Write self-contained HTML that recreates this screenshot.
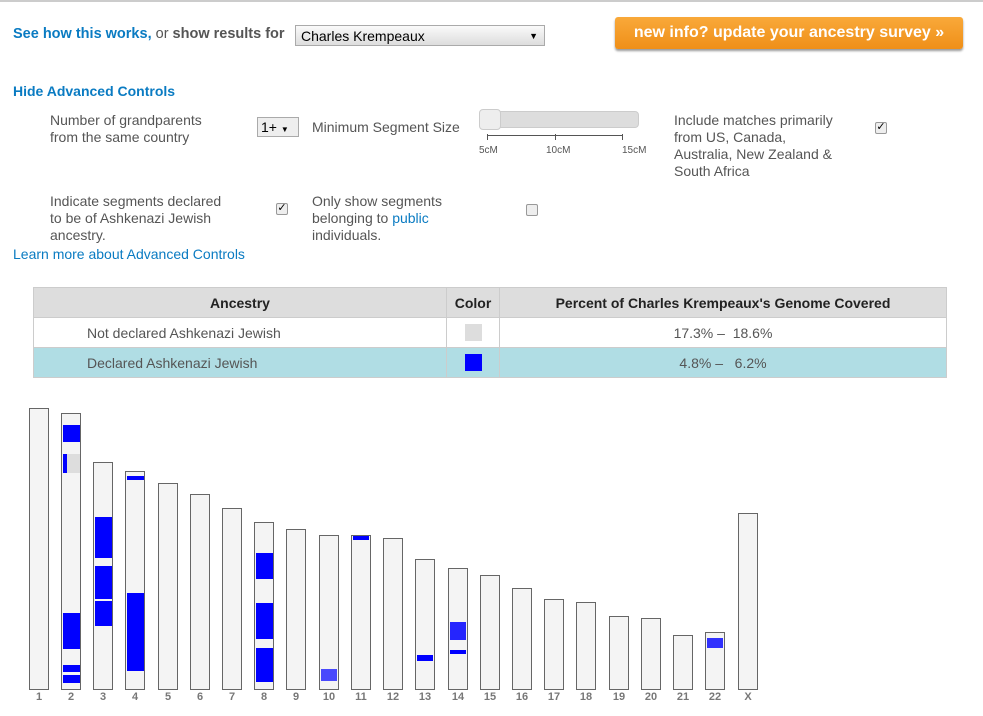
<!DOCTYPE html>
<html><head><style>
body{margin:0;width:983px;height:716px;background:#fff;font-family:"Liberation Sans",sans-serif;position:relative;overflow:hidden;color:#555;font-size:14px}
.a{position:absolute}
.blue{color:#0a7bc2}
.c{position:absolute;width:18px;border:1px solid #666;background:#f4f4f4;bottom:26px}
.n{position:absolute;top:691px;font-size:11px;font-weight:bold;color:#777;width:20px;text-align:center}
.s{position:absolute;background:#0000ff}
.g{position:absolute;background:#ddd}
.chk{position:absolute;width:10px;height:10px;border:1px solid #999;border-radius:2px;background:#eee;font-size:11px;line-height:9px;color:#000;text-align:center}
table{position:absolute;left:33px;top:287px;width:914px;border-collapse:collapse;font-size:14px}
td,th{border:1px solid #ccc;height:29px;padding:0}
th{background:#ddd;color:#222}
</style></head><body>
<div class="a" style="left:0;top:0;width:983px;height:2px;background:#ccc"></div>
<div class="a" style="left:13px;top:26px;font-weight:bold;font-size:14.5px"><span class="blue">See how this works,</span> <span style="font-weight:normal">or</span> show results for</div>
<div class="a" style="left:295px;top:25px;background:linear-gradient(#fafafa,#ddd);border:1px solid #aaa;color:#000;font-size:14px;line-height:20px;padding-left:5px;box-sizing:border-box;width:250px;height:21px">Charles Krempeaux<span style="position:absolute;right:6px;font-size:9px">▼</span></div>
<div class="a" style="left:615px;top:17px;width:348px;height:32px;background:linear-gradient(#f9a93a,#ef8f18);border-radius:3px;box-shadow:0 2px 2px #999;color:#fff;font-weight:bold;font-size:16px;line-height:31px;text-align:center">new info? update your ancestry survey »</div>
<div class="a blue" style="left:13px;top:83px;font-weight:bold">Hide Advanced Controls</div>
<div class="a" style="left:50px;top:112px;line-height:17px">Number of grandparents<br>from the same country</div>
<div class="a" style="left:257px;top:117px;width:42px;height:20px;border:1px solid #aaa;background:#eee;box-sizing:border-box;color:#000;font-size:14px;line-height:19px;padding-left:3px">1+ <span style="font-size:8px">▼</span></div>
<div class="a" style="left:312px;top:119px">Minimum Segment Size</div>
<div class="a" style="left:479px;top:111px;width:158px;height:15px;background:#ddd;border:1px solid #ccc;border-radius:4px"></div>
<div class="a" style="left:479px;top:109px;width:20px;height:19px;background:#eee;border:1px solid #ccc;border-radius:4px"></div>
<div class="a" style="left:487px;top:135px;width:136px;height:1px;background:#555"></div>
<div class="a" style="left:487px;top:134px;width:1px;height:6px;background:#555"></div>
<div class="a" style="left:555px;top:134px;width:1px;height:6px;background:#555"></div>
<div class="a" style="left:622px;top:134px;width:1px;height:6px;background:#555"></div>
<div class="a" style="left:479px;top:145px;font-size:10px">5cM</div>
<div class="a" style="left:546px;top:145px;font-size:10px">10cM</div>
<div class="a" style="left:622px;top:145px;font-size:10px">15cM</div>
<div class="a" style="left:674px;top:112px;line-height:17px">Include matches primarily<br>from US, Canada,<br>Australia, New Zealand &amp;<br>South Africa</div>
<div class="chk" style="left:875px;top:122px">✓</div>
<div class="a" style="left:50px;top:193px;line-height:17px">Indicate segments declared<br>to be of Ashkenazi Jewish<br>ancestry.</div>
<div class="chk" style="left:276px;top:203px">✓</div>
<div class="a" style="left:312px;top:193px;line-height:17px">Only show segments<br>belonging to <span class="blue">public</span><br>individuals.</div>
<div class="chk" style="left:526px;top:204px"></div>
<div class="a blue" style="left:13px;top:246px">Learn more about Advanced Controls</div>
<table>
<tr><th style="width:412px">Ancestry</th><th style="width:52px">Color</th><th>Percent of Charles Krempeaux's Genome Covered</th></tr>
<tr><td style="padding-left:53px">Not declared Ashkenazi Jewish</td><td><div style="width:17px;height:17px;background:#ddd;margin:auto"></div></td><td style="text-align:center">17.3% –&nbsp; 18.6%</td></tr>
<tr style="background:#b0dde4"><td style="padding-left:53px">Declared Ashkenazi Jewish</td><td><div style="width:17px;height:17px;background:#00f;margin:auto"></div></td><td style="text-align:center">4.8% – &nbsp; 6.2%</td></tr>
</table>
<div class="c" style="left:29px;top:408px"></div>
<div class="c" style="left:61px;top:413px"></div>
<div class="c" style="left:93px;top:462px"></div>
<div class="c" style="left:125px;top:471px"></div>
<div class="c" style="left:158px;top:483px"></div>
<div class="c" style="left:190px;top:494px"></div>
<div class="c" style="left:222px;top:508px"></div>
<div class="c" style="left:254px;top:522px"></div>
<div class="c" style="left:286px;top:529px"></div>
<div class="c" style="left:319px;top:535px"></div>
<div class="c" style="left:351px;top:535px"></div>
<div class="c" style="left:383px;top:538px"></div>
<div class="c" style="left:415px;top:559px"></div>
<div class="c" style="left:448px;top:568px"></div>
<div class="c" style="left:480px;top:575px"></div>
<div class="c" style="left:512px;top:588px"></div>
<div class="c" style="left:544px;top:599px"></div>
<div class="c" style="left:576px;top:602px"></div>
<div class="c" style="left:609px;top:616px"></div>
<div class="c" style="left:641px;top:618px"></div>
<div class="c" style="left:673px;top:635px"></div>
<div class="c" style="left:705px;top:632px"></div>
<div class="c" style="left:738px;top:513px"></div>
<div class="s" style="left:63px;top:425px;width:17px;height:17px"></div>
<div class="g" style="left:63px;top:454px;width:17px;height:19px"></div>
<div class="s" style="left:63px;top:454px;width:4px;height:19px"></div>
<div class="s" style="left:63px;top:613px;width:17px;height:36px"></div>
<div class="s" style="left:63px;top:665px;width:17px;height:7px"></div>
<div class="s" style="left:63px;top:675px;width:17px;height:8px"></div>
<div class="s" style="left:95px;top:517px;width:17px;height:41px"></div>
<div class="s" style="left:95px;top:566px;width:17px;height:33px"></div>
<div class="s" style="left:95px;top:601px;width:17px;height:25px"></div>
<div class="s" style="left:127px;top:476px;width:17px;height:4px"></div>
<div class="s" style="left:127px;top:593px;width:17px;height:78px"></div>
<div class="s" style="left:256px;top:553px;width:17px;height:26px"></div>
<div class="s" style="left:256px;top:603px;width:17px;height:36px"></div>
<div class="s" style="left:256px;top:648px;width:17px;height:34px"></div>
<div class="s" style="left:321px;top:669px;width:16px;height:12px;opacity:.7"></div>
<div class="s" style="left:353px;top:536px;width:16px;height:4px"></div>
<div class="s" style="left:417px;top:655px;width:16px;height:6px"></div>
<div class="s" style="left:450px;top:622px;width:16px;height:18px;opacity:.85"></div>
<div class="s" style="left:450px;top:650px;width:16px;height:4px"></div>
<div class="s" style="left:707px;top:638px;width:16px;height:10px;opacity:.8"></div>
<div class="n" style="left:29px">1</div><div class="n" style="left:61px">2</div><div class="n" style="left:93px">3</div><div class="n" style="left:125px">4</div><div class="n" style="left:158px">5</div><div class="n" style="left:190px">6</div><div class="n" style="left:222px">7</div><div class="n" style="left:254px">8</div><div class="n" style="left:286px">9</div><div class="n" style="left:319px">10</div><div class="n" style="left:351px">11</div><div class="n" style="left:383px">12</div><div class="n" style="left:415px">13</div><div class="n" style="left:448px">14</div><div class="n" style="left:480px">15</div><div class="n" style="left:512px">16</div><div class="n" style="left:544px">17</div><div class="n" style="left:576px">18</div><div class="n" style="left:609px">19</div><div class="n" style="left:641px">20</div><div class="n" style="left:673px">21</div><div class="n" style="left:705px">22</div><div class="n" style="left:738px">X</div>
</body></html>
